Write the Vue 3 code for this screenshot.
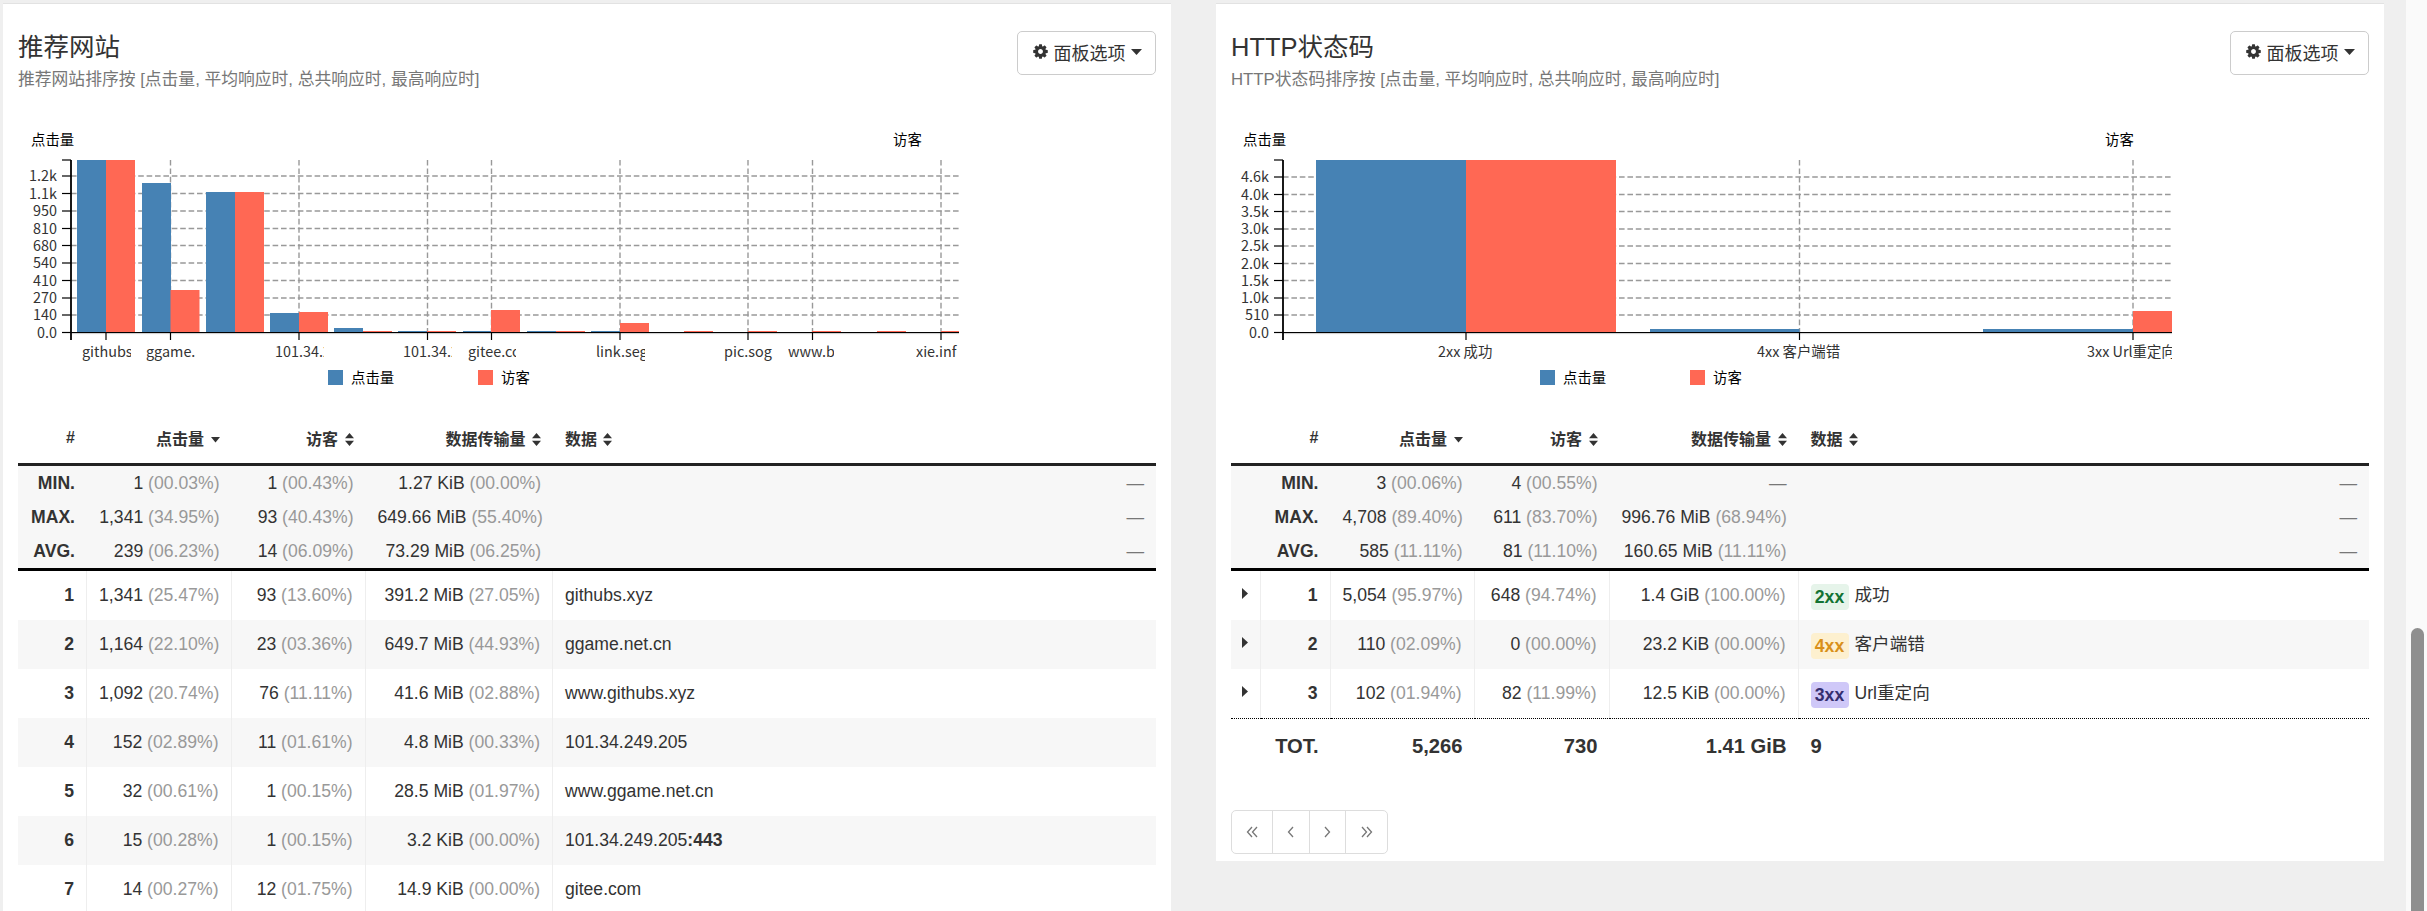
<script setup>
// chart coordinates are page pixels, shifted by the panel's left edge when drawn
const refTicks = {
  left: [[176, '1.2k'], [193.5, '1.1k'], [211, '950'], [228.5, '810'], [245.5, '680'], [263, '540'], [280.5, '410'], [298, '270'], [315, '140'], [332.5, '0.0']],
  right: [[177, '4.6k'], [194.5, '4.0k'], [211.5, '3.5k'], [229, '3.0k'], [246, '2.5k'], [263.5, '2.0k'], [280.5, '1.5k'], [298, '1.0k'], [315, '510'], [332.5, '0.0']]
}

const blue = '#4682b4'
const red = '#ff6854'

const leftBars = [
  [77, 160, blue], [106, 160, red],
  [142, 183, blue], [170.5, 290, red],
  [206, 192, blue], [235, 192, red],
  [270, 313, blue], [299, 312, red],
  [334, 328, blue], [363, 331, red],
  [398, 331, blue], [427, 331, red],
  [463, 331, blue], [491, 310, red],
  [527, 331, blue], [556, 331, red],
  [591, 331, blue], [620, 323, red],
  [684, 331, red], [748, 331, red], [812, 331, red], [877, 331, red]
].map(([x, top, fill]) => ({ x, w: 29, top, fill }))
leftBars.push({ x: 941, w: 18, top: 331, fill: red })

const panels = [
  {
    id: 'referrers',
    left: 3,
    title: '推荐网站',
    sub: '推荐网站排序按 [点击量, 平均响应时, 总共响应时, 最高响应时]',
    chart: {
      axisX: 71,
      endX: 959,
      labelX: 57,
      ticks: refTicks.left,
      xTicks: [106, 170.5, 299, 427.5, 491.5, 620, 748, 812.5, 941],
      bars: leftBars,
      // the report cuts long hostnames to the tick spacing
      xLabels: [
        { x: 82, w: 49, t: 'githubs.' },
        { x: 146, w: 49, t: 'ggame.n' },
        { x: 275, w: 49, t: '101.34.2' },
        { x: 403, w: 49, t: '101.34.2' },
        { x: 468, w: 48, t: 'gitee.co' },
        { x: 596, w: 49, t: 'link.seg' },
        { x: 724, w: 49, t: 'pic.sog' },
        { x: 788, w: 46, t: 'www.b' },
        { x: 916, w: 43, t: 'xie.inf' }
      ],
      hitsTitleX: 31,
      visitorsTitleX: 893,
      legend: [328, 351, 478, 501]
    },
    cols: [69, 144.5, 134, 187.5],
    expandable: false,
    summary: [
      ['MIN.', ['1', '00.03%'], ['1', '00.43%'], ['1.27 KiB', '00.00%']],
      ['MAX.', ['1,341', '34.95%'], ['93', '40.43%'], ['649.66 MiB', '55.40%']],
      ['AVG.', ['239', '06.23%'], ['14', '06.09%'], ['73.29 MiB', '06.25%']]
    ],
    rows: [
      { n: 1, hits: ['1,341', '25.47%'], vis: ['93', '13.60%'], bw: ['391.2 MiB', '27.05%'], data: 'githubs.xyz' },
      { n: 2, hits: ['1,164', '22.10%'], vis: ['23', '03.36%'], bw: ['649.7 MiB', '44.93%'], data: 'ggame.net.cn' },
      { n: 3, hits: ['1,092', '20.74%'], vis: ['76', '11.11%'], bw: ['41.6 MiB', '02.88%'], data: 'www.githubs.xyz' },
      { n: 4, hits: ['152', '02.89%'], vis: ['11', '01.61%'], bw: ['4.8 MiB', '00.33%'], data: '101.34.249.205' },
      { n: 5, hits: ['32', '00.61%'], vis: ['1', '00.15%'], bw: ['28.5 MiB', '01.97%'], data: 'www.ggame.net.cn' },
      { n: 6, hits: ['15', '00.28%'], vis: ['1', '00.15%'], bw: ['3.2 KiB', '00.00%'], data: '101.34.249.205', port: ':443' },
      { n: 7, hits: ['14', '00.27%'], vis: ['12', '01.75%'], bw: ['14.9 KiB', '00.00%'], data: 'gitee.com' }
    ]
  },
  {
    id: 'status',
    left: 1216,
    title: 'HTTP状态码',
    sub: 'HTTP状态码排序按 [点击量, 平均响应时, 总共响应时, 最高响应时]',
    chart: {
      axisX: 1283,
      endX: 2172,
      labelX: 1269,
      ticks: refTicks.right,
      xTicks: [1466, 1799.5, 2133],
      bars: [
        { x: 1316, w: 150, top: 160, fill: blue },
        { x: 1466, w: 150, top: 160, fill: red },
        { x: 1650, w: 149.5, top: 329, fill: blue },
        { x: 1983, w: 150, top: 329, fill: blue },
        { x: 2133, w: 39, top: 311, fill: red }
      ],
      xLabels: [
        { x: 1438, w: 90, t: '2xx 成功' },
        { x: 1757, w: 120, t: '4xx 客户端错' },
        { x: 2087, w: 85, t: '3xx Url重定向' }
      ],
      hitsTitleX: 1243,
      visitorsTitleX: 2105,
      legend: [1540, 1563, 1690, 1713]
    },
    cols: [29.5, 70, 144, 135, 189],
    expandable: true,
    summary: [
      ['MIN.', ['3', '00.06%'], ['4', '00.55%'], null],
      ['MAX.', ['4,708', '89.40%'], ['611', '83.70%'], ['996.76 MiB', '68.94%']],
      ['AVG.', ['585', '11.11%'], ['81', '11.10%'], ['160.65 MiB', '11.11%']]
    ],
    rows: [
      { n: 1, hits: ['5,054', '95.97%'], vis: ['648', '94.74%'], bw: ['1.4 GiB', '100.00%'], badge: '2xx', tone: 'ok', data: '成功' },
      { n: 2, hits: ['110', '02.09%'], vis: ['0', '00.00%'], bw: ['23.2 KiB', '00.00%'], badge: '4xx', tone: 'warn', data: '客户端错' },
      { n: 3, hits: ['102', '01.94%'], vis: ['82', '11.99%'], bw: ['12.5 KiB', '00.00%'], badge: '3xx', tone: 'redir', data: 'Url重定向' }
    ],
    total: ['5,266', '730', '1.41 GiB', '9'],
    pager: true
  }
]

const cog = 'M1152 896q0-106-75-181t-181-75-181 75-75 181 75 181 181 75 181-75 75-181zm512-109v222q0 12-8 23t-20 13l-185 28q-19 54-39 91 35 50 107 138 10 12 10 25t-9 23q-27 37-99 108t-94 71q-12 0-26-9l-138-108q-44 23-91 38-16 136-29 186-7 28-36 28h-222q-14 0-24.5-8.5t-11.5-21.5l-28-184q-49-16-90-37l-141 107q-10 9-25 9-14 0-25-11-126-114-165-168-7-10-7-23 0-12 8-23 15-21 51-66.5t54-70.5q-27-50-41-99l-183-27q-13-2-21-12.5t-8-23.5v-222q0-12 8-23t19-13l186-28q14-46 39-92-40-57-107-138-10-12-10-24 0-10 9-23 26-36 98.5-107.5t94.5-71.5q13 0 26 10l138 107q44-23 91-38 16-136 29-186 7-28 36-28h222q14 0 24.5 8.5t11.5 21.5l28 184q49 16 90 37l142-107q9-9 24-9 13 0 25 10 129 119 165 170 7 8 7 22 0 12-8 23-15 21-51 66.5t-54 70.5q26 50 41 98l183 28q13 2 21 12.5t8 23.5z'

const pagerIcons = [
  { w: 41, d: 'M6 1 L1.5 6 L6 11 M11 1 L6.5 6 L11 11' },
  { w: 37, d: 'M8 1 L3.5 6 L8 11' },
  { w: 37, d: 'M4 1 L8.5 6 L4 11' },
  { w: 41, d: 'M1 1 L5.5 6 L1 11 M6 1 L10.5 6 L6 11' }
]
</script>

<template>
  <div class="page">
    <main class="columns">
      <section v-for="p in panels" :key="p.id" class="panel">
        <header class="panel-head">
          <div>
            <h2 class="panel-title">{{ p.title }}</h2>
            <p class="panel-sub">{{ p.sub }}</p>
          </div>
          <button class="opts-btn" type="button">
            <svg class="cog" viewBox="0 0 1792 1792" width="17" height="17"><path :d="cog" fill="#333" /></svg>
            <span>面板选项</span>
            <svg width="11" height="6" viewBox="0 0 11 6"><path d="M0 0 H11 L5.5 6 Z" fill="#333" /></svg>
          </button>
        </header>

        <svg class="chart" width="1168" height="280" :viewBox="`${p.left} 120 1168 280`">
          <text class="axis-title" :x="p.chart.hitsTitleX" y="145">点击量</text>
          <text class="axis-title" :x="p.chart.visitorsTitleX" y="145">访客</text>

          <!-- grid -->
          <line v-for="t in p.chart.ticks.slice(0, -1)" :key="'h' + t[0]" class="grid"
            :x1="p.chart.axisX" :x2="p.chart.endX" :y1="t[0]" :y2="t[0]" />
          <line v-for="x in p.chart.xTicks" :key="'v' + x" class="grid" :x1="x" :x2="x" y1="160" y2="332" />

          <rect v-for="(b, i) in p.chart.bars" :key="'b' + i" :x="b.x" :y="b.top" :width="b.w" :height="332 - b.top"
            :fill="b.fill" />

          <!-- axes -->
          <line class="baseline-shade" :x1="p.chart.axisX" :x2="p.chart.endX" y1="333.6" y2="333.6" />
          <line class="axis" :x1="p.chart.axisX" :x2="p.chart.endX" y1="332.5" y2="332.5" />
          <line class="axis-y" :x1="p.chart.axisX" :x2="p.chart.axisX" y1="160" y2="340" />
          <line class="axis" :x1="p.chart.axisX - 9" :x2="p.chart.axisX" y1="160" y2="160" />
          <g v-for="t in p.chart.ticks" :key="'t' + t[0]">
            <line class="axis" :x1="p.chart.axisX - 9" :x2="p.chart.axisX" :y1="t[0]" :y2="t[0]" />
            <text class="tick-text" text-anchor="end" :x="p.chart.labelX" :y="t[0] + 5">{{ t[1] }}</text>
          </g>
          <line v-for="x in p.chart.xTicks" :key="'x' + x" class="axis" :x1="x" :x2="x" y1="332" y2="340" />

          <!-- nested svg clips the label at the tick spacing -->
          <svg v-for="l in p.chart.xLabels" :key="l.x" :x="l.x" y="340" :width="l.w" height="24">
            <text class="tick-text" x="0" y="17">{{ l.t }}</text>
          </svg>

          <rect :x="p.chart.legend[0]" y="370" width="15" height="15" :fill="blue" />
          <text class="axis-title" :x="p.chart.legend[1]" y="383">点击量</text>
          <rect :x="p.chart.legend[2]" y="370" width="15" height="15" :fill="red" />
          <text class="axis-title" :x="p.chart.legend[3]" y="383">访客</text>
        </svg>

        <div class="table-wrap">
          <table class="stats">
            <colgroup>
              <col v-for="(w, i) in p.cols" :key="i" :style="{ width: w + 'px' }" />
              <col />
            </colgroup>
            <thead>
              <tr>
                <th v-if="p.expandable"></th>
                <th class="num">#</th>
                <th class="num">点击量 <svg class="sort" width="9" height="13" viewBox="0 0 9 13"><path d="M0 4 H9 L4.5 9.5 Z" fill="#333" /></svg></th>
                <th class="num">访客 <svg class="sort" width="9" height="13" viewBox="0 0 9 13"><path d="M4.5 0 L9 5.3 H0 Z M0 7.7 H9 L4.5 13 Z" fill="#333" /></svg></th>
                <th class="num">数据传输量 <svg class="sort" width="9" height="13" viewBox="0 0 9 13"><path d="M4.5 0 L9 5.3 H0 Z M0 7.7 H9 L4.5 13 Z" fill="#333" /></svg></th>
                <th class="txt">数据 <svg class="sort" width="9" height="13" viewBox="0 0 9 13"><path d="M4.5 0 L9 5.3 H0 Z M0 7.7 H9 L4.5 13 Z" fill="#333" /></svg></th>
              </tr>
            </thead>
            <tbody class="summary">
              <tr v-for="s in p.summary" :key="s[0]">
                <td v-if="p.expandable"></td>
                <td class="num strong">{{ s[0] }}</td>
                <td v-for="(c, i) in s.slice(1)" :key="i" class="num">
                  <template v-if="c">{{ c[0] }} <span class="pct">({{ c[1] }})</span></template>
                  <span v-else class="dash">—</span>
                </td>
                <td class="num"><span class="dash">—</span></td>
              </tr>
            </tbody>
            <tbody class="rows">
              <tr v-for="r in p.rows" :key="r.n">
                <td v-if="p.expandable" class="expand">
                  <svg width="6" height="11" viewBox="0 0 6 11"><path d="M0 0 L6 5.5 L0 11 Z" fill="#333" /></svg>
                </td>
                <td class="num strong">{{ r.n }}</td>
                <td class="num">{{ r.hits[0] }} <span class="pct">({{ r.hits[1] }})</span></td>
                <td class="num">{{ r.vis[0] }} <span class="pct">({{ r.vis[1] }})</span></td>
                <td class="num">{{ r.bw[0] }} <span class="pct">({{ r.bw[1] }})</span></td>
                <td class="txt">
                  <span v-if="r.badge" :class="['badge', r.tone]">{{ r.badge }}</span>{{ r.data }}<b v-if="r.port">{{ r.port }}</b>
                </td>
              </tr>
            </tbody>
            <tfoot v-if="p.total">
              <tr>
                <td></td>
                <td class="num">TOT.</td>
                <td class="num">{{ p.total[0] }}</td>
                <td class="num">{{ p.total[1] }}</td>
                <td class="num">{{ p.total[2] }}</td>
                <td class="txt">{{ p.total[3] }}</td>
              </tr>
            </tfoot>
          </table>

          <nav v-if="p.pager" class="pager">
            <a v-for="(b, i) in pagerIcons" :key="i" class="pager-btn" :style="{ width: b.w + 'px' }">
              <svg width="12" height="12" viewBox="0 0 12 12"><path :d="b.d" fill="none" stroke="#777" stroke-width="1.3" /></svg>
            </a>
          </nav>
        </div>
      </section>
    </main>

    <aside class="scroll-track"><div class="scroll-thumb"></div></aside>
  </div>
</template>

<style>
html,
body {
  margin: 0;
  height: 911px;
  overflow: hidden;
  background: #efefef;
}
</style>

<style scoped>
.page {
  display: flex;
  height: 911px;
  overflow: hidden;
  background: #efefef;
  font-family: "Liberation Sans", "Noto Sans CJK SC", sans-serif;
  font-size: 17.6px;
  color: #333;
}

.columns {
  flex: 1;
  display: grid;
  grid-template-columns: 1168px 1168px;
  column-gap: 45px;
  align-items: start;
  padding: 3px 0 0 3px;
  min-width: 0;
}

.panel {
  background: #fff;
  border-top: 1px solid #e2e2e2;
}

.panel-head {
  display: flex;
  justify-content: space-between;
  align-items: flex-start;
  padding: 0 15px;
  height: 85px;
}

.panel-title {
  margin: 28px 0 8px;
  font-size: 25.5px;
  line-height: 30px;
  font-weight: 400;
  color: #333;
}

.panel-sub {
  margin: 0;
  font-size: 16.8px;
  line-height: 20px;
  color: #777;
}

.opts-btn {
  box-sizing: border-box;
  margin-top: 27px;
  width: 139px;
  height: 44px;
  display: flex;
  align-items: center;
  justify-content: center;
  gap: 5px;
  padding: 0 0 3px;
  background: #fff;
  border: 1px solid #ccc;
  border-radius: 5px;
  font: inherit;
  font-size: 18px;
  color: #333;
}

.chart {
  display: block;
  margin-top: 31px;
  font-family: "Noto Sans CJK SC", sans-serif;
  font-size: 14.4px;
}

.grid {
  stroke: #999;
  stroke-width: 1.4;
  stroke-dasharray: 5.6 2.8;
}

.axis {
  stroke: #000;
  stroke-width: 1.2;
}

.axis-y {
  stroke: #000;
  stroke-width: 1.8;
}

.baseline-shade {
  stroke: #ccc;
  stroke-width: 1;
}

.axis-title {
  fill: #000;
}

.tick-text {
  fill: #333;
}

.table-wrap {
  margin-top: 13px;
  padding: 0 15px;
}

.stats {
  width: 100%;
  table-layout: fixed;
  border-collapse: separate;
  border-spacing: 0;
}

.stats th,
.stats td {
  box-sizing: border-box;
  padding: 0 12px;
  white-space: nowrap;
}

.stats th {
  height: 53px;
  font-size: 16px;
  font-weight: 700;
  border-bottom: 3px solid #222;
}

.num {
  text-align: right;
}

.txt {
  text-align: left;
}

.sort {
  margin-left: 2px;
  vertical-align: -1px;
}

.summary td {
  height: 34px;
  background: #f7f7f7;
}

.summary tr:last-child td {
  height: 37px;
  border-bottom: 3px solid #000;
}

.rows td {
  height: 49px;
  border-right: 1px solid #eee;
}

.rows td:last-child {
  border-right: none;
}

.rows tr:nth-child(even) td {
  background: #f7f7f7;
}

.expand {
  padding: 0 0 0 11px !important;
}

.expand svg {
  display: block;
  margin-top: -4px;
}

.strong {
  font-weight: 700;
}

.pct {
  color: #999;
}

.dash {
  color: #777;
}

.badge {
  display: inline-block;
  width: 38px;
  height: 26px;
  margin-right: 6px;
  border-radius: 4px;
  text-align: center;
  line-height: 26px;
  font-weight: 700;
  vertical-align: middle;
}

.badge.ok {
  background: #e6f4ea;
  color: #137333;
}

.badge.warn {
  background: #fdf0cf;
  color: #d9901a;
}

.badge.redir {
  background: #cfc8f8;
  color: #352f70;
}

tfoot td {
  height: 55px;
  border-top: 1px dotted #000;
  font-size: 20.2px;
  font-weight: 700;
}

.pager {
  display: flex;
  box-sizing: border-box;
  width: 157px;
  height: 44px;
  margin: 37px 0 7px;
  border: 1px solid #ddd;
  border-radius: 5px;
}

.pager-btn {
  box-sizing: border-box;
  display: flex;
  align-items: center;
  justify-content: center;
  border-right: 1px solid #ddd;
}

.pager-btn:last-child {
  border-right: none;
}

.scroll-track {
  width: 21px;
  flex: none;
  background: #fafafa;
  padding: 628px 3px 0 5px;
  box-sizing: border-box;
}

.scroll-thumb {
  height: 290px;
  background: #8f8f8f;
  border-radius: 7px;
}
</style>
